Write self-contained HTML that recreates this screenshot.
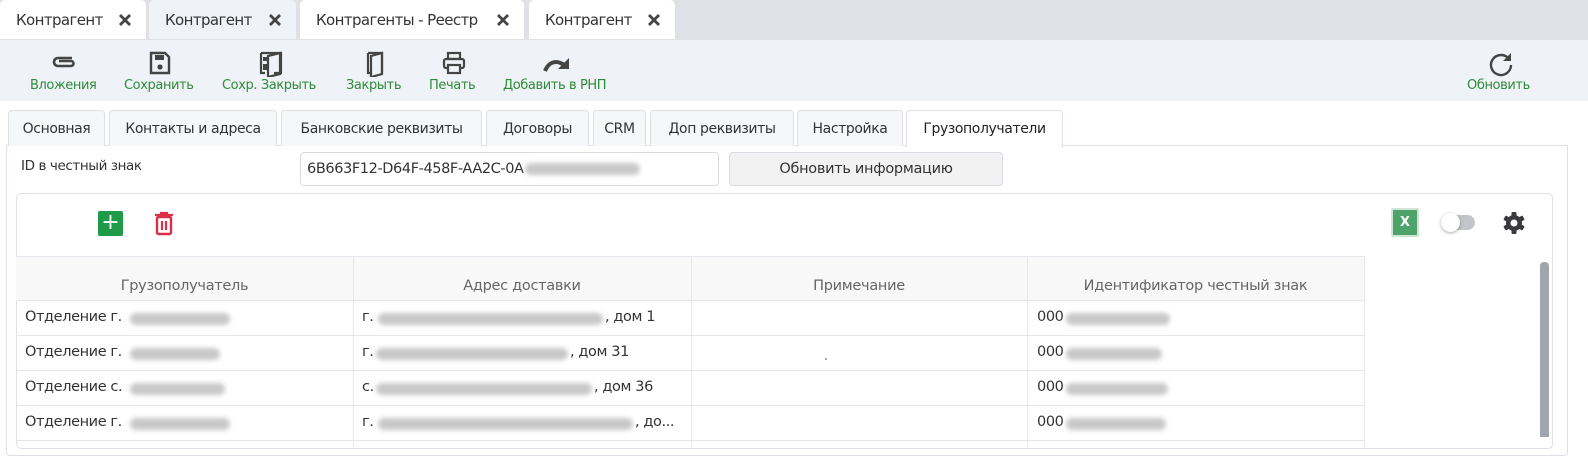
<!DOCTYPE html>
<html style="width:1588px;height:463px;overflow:hidden"><head><meta charset="utf-8"><style>
*{box-sizing:border-box;margin:0;padding:0}
html,body{width:1588px;height:463px;overflow:hidden}
body{background:#fff;font-family:"DejaVu Sans","Liberation Sans",sans-serif;position:relative;color:#333}
.a{position:absolute}
.tt{position:absolute;top:0;height:39px;background:#fff;border-radius:5px 5px 0 0;font-size:15px;line-height:40px;padding-left:16px;color:#333;letter-spacing:-0.6px;overflow:hidden}
.tt svg{position:absolute;right:14px;top:13px}
.tb{position:absolute;top:78px;font-size:13px;color:#2e8b3a;letter-spacing:-0.4px;white-space:nowrap}
.ic{position:absolute;top:51px}
.pt{position:absolute;top:110px;height:36px;border:1px solid #dde0e8;border-bottom:none;border-radius:4px 4px 0 0;background:#f6f7f9;font-size:14px;line-height:36px;text-align:center;color:#333;letter-spacing:-0.4px;white-space:nowrap;overflow:hidden}
.blur{position:absolute;height:12px;background:#c8c8c8;border-radius:6px;filter:blur(2.5px)}
.cell{position:absolute;font-size:14.5px;color:#333;letter-spacing:-0.4px;white-space:nowrap}
.hl{position:absolute;left:16px;width:1348px;height:1px;background:#e6e7ec}
.vl{position:absolute;top:256px;height:191px;width:1px;background:#e6e7ec}
.th{position:absolute;top:278px;font-size:14.5px;color:#666;text-align:center;letter-spacing:-0.3px;white-space:nowrap}
</style></head><body>
<div class="a" style="left:0;top:0;width:1588px;height:40px;background:#dfe1e6"></div>
<div class="tt" style="left:0;width:146px">Контрагент<svg width="14" height="14" viewBox="0 0 14 14"><path d="M2 2l10 10M12 2L2 12" stroke="#444" stroke-width="2.8"/></svg></div>
<div class="tt" style="left:149px;width:147px;background:#eff2f7">Контрагент<svg width="14" height="14" viewBox="0 0 14 14"><path d="M2 2l10 10M12 2L2 12" stroke="#444" stroke-width="2.8"/></svg></div>
<div class="tt" style="left:300px;width:224px">Контрагенты - Реестр<svg width="14" height="14" viewBox="0 0 14 14"><path d="M2 2l10 10M12 2L2 12" stroke="#444" stroke-width="2.8"/></svg></div>
<div class="tt" style="left:529px;width:146px">Контрагент<svg width="14" height="14" viewBox="0 0 14 14"><path d="M2 2l10 10M12 2L2 12" stroke="#444" stroke-width="2.8"/></svg></div>
<div class="a" style="left:0;top:40px;width:1588px;height:61px;background:#eff2f7"></div>
<svg class="ic" style="left:52px;top:55px" width="24" height="14" viewBox="0 0 24 14"><path d="M20 3H6a4 4 0 0 0 0 8h13a2.5 2.5 0 0 0 0-5H7" fill="none" stroke="#444" stroke-width="2.6"/></svg>
<svg class="ic" style="left:149px" width="22" height="24" viewBox="0 0 22 24"><path d="M2 2h14l4 4v16H2z" fill="none" stroke="#444" stroke-width="2.4"/><rect x="6" y="4" width="9" height="5" fill="#444"/><circle cx="11" cy="16" r="2.6" fill="#444"/></svg>
<svg class="ic" style="left:259px" width="24" height="26" viewBox="0 0 24 26"><path d="M2 2h20v20h-7M2 2v20h4" fill="none" stroke="#444" stroke-width="2.2"/><path d="M9 5l12-3v21l-12 3z" fill="none" stroke="#444" stroke-width="2.2"/><rect x="4" y="6" width="4" height="4" fill="#444"/><rect x="4" y="13" width="4" height="6" fill="#444"/></svg>
<svg class="ic" style="left:366px" width="18" height="26" viewBox="0 0 18 26"><path d="M2 2h14v20M2 2v20h3" fill="none" stroke="#444" stroke-width="2.2"/><path d="M5 5l11-3v21l-11 3z" fill="none" stroke="#444" stroke-width="2.2"/></svg>
<svg class="ic" style="left:442px" width="24" height="24" viewBox="0 0 24 24"><rect x="6" y="2" width="12" height="6" fill="none" stroke="#444" stroke-width="2.2"/><rect x="2" y="8" width="20" height="9" rx="2" fill="none" stroke="#444" stroke-width="2.2"/><rect x="6" y="14" width="12" height="8" fill="#eff2f7" stroke="#444" stroke-width="2.2"/></svg>
<svg class="ic" style="left:543px;top:55px" width="28" height="18" viewBox="0 0 28 18"><path d="M2 16c4-10 12-11 19-6" fill="none" stroke="#444" stroke-width="4"/><path d="M26 3v11h-11z" fill="#444"/></svg>
<svg class="ic" style="left:1488px" width="26" height="26" viewBox="0 0 26 26"><path d="M21 8A10 10 0 1 0 23 14" fill="none" stroke="#444" stroke-width="2.4"/><path d="M23 2v8h-8z" fill="#444"/></svg>
<div class="tb" style="left:30px">Вложения</div>
<div class="tb" style="left:124px">Сохранить</div>
<div class="tb" style="left:222px">Сохр. Закрыть</div>
<div class="tb" style="left:346px">Закрыть</div>
<div class="tb" style="left:429px">Печать</div>
<div class="tb" style="left:503px">Добавить в РНП</div>
<div class="tb" style="left:1467px">Обновить</div>
<div class="a" style="left:6px;top:145px;width:1562px;height:311px;border:1px solid #dde0e8;border-radius:0 0 4px 4px"></div>
<div class="pt" style="left:8px;width:97px">Основная</div>
<div class="pt" style="left:109px;width:168px">Контакты и адреса</div>
<div class="pt" style="left:281px;width:201px">Банковские реквизиты</div>
<div class="pt" style="left:486px;width:103px">Договоры</div>
<div class="pt" style="left:593px;width:53px">CRM</div>
<div class="pt" style="left:650px;width:144px">Доп реквизиты</div>
<div class="pt" style="left:797px;width:106px">Настройка</div>
<div class="pt" style="left:906px;width:157px;height:37px;background:#fff;color:#222">Грузополучатели</div>
<div class="a" style="left:21px;top:158px;font-size:13.5px;letter-spacing:-0.4px">ID в честный знак</div>
<div class="a" style="left:300px;top:152px;width:419px;height:34px;border:1px solid #d8dbe2;border-radius:4px;font-size:14.5px;line-height:32px;padding-left:6px;letter-spacing:-0.4px">6B663F12-D64F-458F-AA2C-0A</div>
<div class="blur" style="left:525px;top:163px;width:115px"></div>
<div class="a" style="left:729px;top:152px;width:274px;height:34px;border:1px solid #d8dbe2;border-radius:4px;background:#f2f2f3;font-size:14.5px;line-height:32px;text-align:center;letter-spacing:-0.3px">Обновить информацию</div>
<div class="a" style="left:16px;top:193px;width:1537px;height:256px;border:1px solid #dde0e8;border-radius:5px"></div>
<div class="a" style="left:98px;top:211px;width:25px;height:25px;background:#1f9a47;border-radius:2px;color:#fff;font-size:22px;line-height:24px;text-align:center">+</div>
<svg class="a" style="left:154px;top:211px" width="20" height="25" viewBox="0 0 20 25"><path d="M1 4h18M7 4V2h6v2" fill="none" stroke="#dc2f4a" stroke-width="2.2"/><rect x="3" y="6" width="14" height="17" rx="1.5" fill="none" stroke="#dc2f4a" stroke-width="2.4"/><path d="M8 10v9M12 10v9" stroke="#dc2f4a" stroke-width="2.2"/></svg>
<div class="a" style="left:1391px;top:208px;width:28px;height:29px;background:#cfe6d5;border-radius:2px"></div>
<div class="a" style="left:1393px;top:210px;width:24px;height:25px;background:#4ea36a;color:#fff;font-size:13px;font-weight:bold;line-height:25px;text-align:center">X</div>
<div class="a" style="left:1443px;top:215px;width:32px;height:15px;background:#c3c5ca;border-radius:8px"></div>
<div class="a" style="left:1441px;top:213px;width:19px;height:19px;background:#fff;border-radius:50%;box-shadow:0 1px 3px rgba(0,0,0,.35)"></div>
<svg class="a" style="left:1502px;top:211px" width="24" height="24" viewBox="0 0 24 24"><g fill="#3a3a3f"><circle cx="12" cy="12" r="8"/><rect x="9.5" y="1" width="5" height="22" rx="1"/><rect x="9.5" y="1" width="5" height="22" rx="1" transform="rotate(60 12 12)"/><rect x="9.5" y="1" width="5" height="22" rx="1" transform="rotate(120 12 12)"/></g><circle cx="12" cy="12" r="3.5" fill="#fff"/></svg>
<div class="a" style="left:16px;top:256px;width:1348px;height:44px;background:#f8f8f8"></div>
<div class="hl" style="top:256px"></div><div class="hl" style="top:300px"></div><div class="hl" style="top:335px"></div><div class="hl" style="top:370px"></div><div class="hl" style="top:405px"></div><div class="hl" style="top:440px"></div>
<div class="vl" style="left:353px"></div><div class="vl" style="left:691px"></div><div class="vl" style="left:1027px"></div><div class="vl" style="left:1364px"></div>
<div class="th" style="left:16px;width:337px">Грузополучатель</div>
<div class="th" style="left:353px;width:338px">Адрес доставки</div>
<div class="th" style="left:691px;width:336px">Примечание</div>
<div class="th" style="left:1027px;width:337px">Идентификатор честный знак</div>
<div class="cell" style="left:25px;top:309px">Отделение г.</div><div class="blur" style="left:130px;top:313px;width:100px"></div>
<div class="cell" style="left:25px;top:344px">Отделение г.</div><div class="blur" style="left:130px;top:348px;width:90px"></div>
<div class="cell" style="left:25px;top:379px">Отделение с.</div><div class="blur" style="left:130px;top:383px;width:95px"></div>
<div class="cell" style="left:25px;top:414px">Отделение г.</div><div class="blur" style="left:130px;top:418px;width:100px"></div>
<div class="cell" style="left:362px;top:309px">г.</div><div class="blur" style="left:378px;top:313px;width:225px"></div><div class="cell" style="left:605px;top:309px">, дом 1</div>
<div class="cell" style="left:362px;top:344px">г.</div><div class="blur" style="left:376px;top:348px;width:192px"></div><div class="cell" style="left:570px;top:344px">, дом 31</div>
<div class="cell" style="left:362px;top:379px">с.</div><div class="blur" style="left:376px;top:383px;width:216px"></div><div class="cell" style="left:594px;top:379px">, дом 36</div>
<div class="cell" style="left:362px;top:414px">г.</div><div class="blur" style="left:378px;top:418px;width:255px"></div><div class="cell" style="left:635px;top:414px">, до...</div>
<div class="cell" style="left:1037px;top:309px">000</div><div class="blur" style="left:1066px;top:313px;width:104px"></div>
<div class="cell" style="left:1037px;top:344px">000</div><div class="blur" style="left:1066px;top:348px;width:96px"></div>
<div class="cell" style="left:1037px;top:379px">000</div><div class="blur" style="left:1066px;top:383px;width:102px"></div>
<div class="cell" style="left:1037px;top:414px">000</div><div class="blur" style="left:1066px;top:418px;width:100px"></div>
<div class="a" style="left:825px;top:358px;width:2px;height:2px;background:#aaa"></div>
<div class="a" style="left:1540px;top:262px;width:9px;height:175px;background:#a2a5ad;border-radius:4px 4px 0 0"></div>
</body></html>
